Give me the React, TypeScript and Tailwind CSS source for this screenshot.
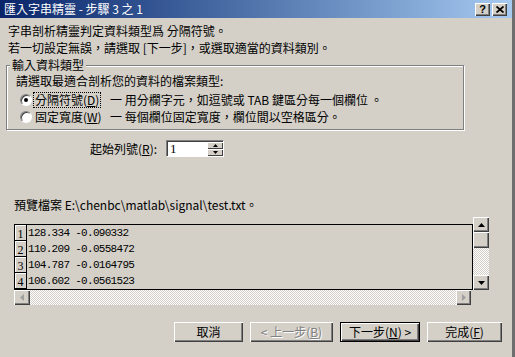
import React from 'react';

const rows = [
  { n: '1', v: '128.334 -0.090332' },
  { n: '2', v: '110.209 -0.0558472' },
  { n: '3', v: '104.787 -0.0164795' },
  { n: '4', v: '106.602 -0.0561523' },
];

const Tri: React.FC<{ dir: 'up' | 'down' | 'left' | 'right'; color?: string }> = ({ dir, color = '#000' }) => {
  const vertical = dir === 'up' || dir === 'down';
  const pts = {
    up: '0,4 3.5,0 7,4',
    down: '0,0 3.5,4 7,0',
    left: '4,0 0,3.5 4,7',
    right: '0,0 4,3.5 0,7',
  }[dir];
  return (
    <svg width={vertical ? 7 : 4} height={vertical ? 4 : 7} viewBox={vertical ? '0 0 7 4' : '0 0 4 7'}>
      <polygon points={pts} fill={color} />
    </svg>
  );
};

const Radio: React.FC<{ checked?: boolean }> = ({ checked }) => (
  <div className="w-[12px] h-[12px] rounded-full bg-white border border-t-[#808080] border-l-[#808080] border-b-white border-r-white shadow-[inset_1px_1px_0_#404040] flex items-center justify-center">
    {checked && <div className="w-[4px] h-[4px] rounded-full bg-black" />}
  </div>
);

export default function App() {
  return (
    <div className="w-[515px] h-[357px] overflow-hidden bg-[#d4d0c8] border-r-[3px] border-r-[#6e6e6e] flex flex-col text-[12px] text-black font-['Noto_Sans_CJK_TC','Noto_Sans_CJK_SC',sans-serif]">
      {/* title bar */}
      <div className="h-[18px] shrink-0 flex items-center justify-between bg-gradient-to-r from-[#0a246a] to-[#a6caf0] pl-[4px] pr-[5px]">
        <span className="text-white leading-[18px]">匯入字串精靈 - 步驟 3 之 1</span>
        <div className="flex gap-[2px]">
          <div className="w-[15px] h-[13px] bg-[#d4d0c8] shadow-[inset_1px_1px_0_#fff,inset_-1px_-1px_0_#404040,inset_-2px_-2px_0_#808080] flex items-center justify-center text-[11px] font-bold leading-none font-['Liberation_Sans',sans-serif]">
            ?
          </div>
          <div className="w-[15px] h-[13px] bg-[#d4d0c8] shadow-[inset_1px_1px_0_#fff,inset_-1px_-1px_0_#404040,inset_-2px_-2px_0_#808080] flex items-center justify-center">
            <svg width="8" height="7" viewBox="0 0 8 7">
              <path d="M0.5 0.5 L7.5 6.5 M7.5 0.5 L0.5 6.5" stroke="#000" strokeWidth="1.8" />
            </svg>
          </div>
        </div>
      </div>

      <div className="pl-[8px] pt-[4px] leading-[17px]">
        <p>字串剖析精靈判定資料類型爲 分隔符號。</p>
        <p>若一切設定無誤，請選取 [下一步]，或選取適當的資料類別。</p>
      </div>

      {/* data type group */}
      <fieldset className="mt-[3px] ml-[6px] w-[458px] border border-[#808080] shadow-[1px_1px_0_#fff,inset_1px_1px_0_#fff] pl-[9px] pb-[4px]">
        <legend className="ml-[-6px] px-[2px] leading-[12px] bg-[#d4d0c8]">輸入資料類型</legend>
        <p className="pt-[1px] leading-[17px]">請選取最適合剖析您的資料的檔案類型:</p>
        <div className="mt-[2px] flex flex-col">
          <div className="flex items-center h-[17px] whitespace-nowrap">
            <div className="ml-[4px]">
              <Radio checked />
            </div>
            <div className="ml-[1px] w-[74px] h-[16px] flex items-center">
              <span className="border border-dotted border-black px-[1px] leading-[14px]">
                分隔符號(<span className="underline">D</span>)
              </span>
            </div>
            <span className="ml-[3px] leading-[17px]">一 用分欄字元，如逗號或 TAB 鍵區分每一個欄位 。</span>
          </div>
          <div className="flex items-center h-[17px] whitespace-nowrap">
            <div className="ml-[4px]">
              <Radio />
            </div>
            <div className="ml-[1px] w-[74px] h-[16px] flex items-center">
              <span className="px-[2px] leading-[14px]">
                固定寬度(<span className="underline">W</span>)
              </span>
            </div>
            <span className="ml-[3px] leading-[17px]">一 每個欄位固定寬度，欄位間以空格區分。</span>
          </div>
        </div>
      </fieldset>

      {/* start row */}
      <div className="mt-[10px] pl-[90px] flex items-center h-[17px] whitespace-nowrap">
        <span className="w-[76px] leading-[17px]">
          起始列號(<span className="underline">R</span>):
        </span>
        <div className="w-[58px] h-[17px] bg-white border border-t-[#808080] border-l-[#808080] border-b-white border-r-white shadow-[inset_1px_1px_0_#404040] flex">
          <span className="flex-1 pl-[3px] leading-[15px] font-['Liberation_Serif',serif] text-[13px]">1</span>
          <div className="w-[16px] flex flex-col pt-[1px]">
            <div className="flex-1 bg-[#d4d0c8] shadow-[inset_1px_1px_0_#fff,inset_-1px_-1px_0_#404040] flex items-center justify-center">
              <svg width="5" height="3" viewBox="0 0 5 3">
                <polygon points="0,3 2.5,0 5,3" fill="#000" />
              </svg>
            </div>
            <div className="flex-1 bg-[#d4d0c8] shadow-[inset_1px_1px_0_#fff,inset_-1px_-1px_0_#404040] flex items-center justify-center">
              <svg width="5" height="3" viewBox="0 0 5 3">
                <polygon points="0,0 2.5,3 5,0" fill="#000" />
              </svg>
            </div>
          </div>
        </div>
      </div>

      <p className="mt-[39px] pl-[14px] leading-[17px]">預覽檔案 E:\chenbc\matlab\signal\test.txt。</p>

      {/* preview */}
      <div className="mt-[4px] pl-[14px] flex items-start">
        <div className="pt-[7px] flex flex-col">
          <div className="w-[459px] h-[66px] border border-black flex flex-col">
            {rows.map((r) => (
              <div key={r.n} className="h-[16px] flex items-stretch">
                <div className="w-[12px] border-r border-b border-black bg-[#d4d0c8] shadow-[inset_1px_1px_0_#fff] flex items-end justify-center font-['Liberation_Serif',serif] text-[12px] leading-[12px]">
                  {r.n}
                </div>
                <span className="pl-[1px] font-['Liberation_Mono',monospace] text-[11px] tracking-[-0.7px] leading-[16px]">
                  {r.v}
                </span>
              </div>
            ))}
          </div>
          <div className="w-[457px] h-[15px] flex bg-[image:repeating-conic-gradient(#ffffff_0_25%,#d4d0c8_0_50%)] bg-[length:2px_2px]">
            <div className="w-[16px] h-full bg-[#d4d0c8] shadow-[inset_1px_1px_0_#fff,inset_-1px_-1px_0_#404040,inset_-2px_-2px_0_#808080] flex items-center justify-center">
              <Tri dir="left" color="#a0a0a0" />
            </div>
            <div className="flex-1" />
            <div className="w-[15px] h-full bg-[#d4d0c8] shadow-[inset_1px_1px_0_#fff,inset_-1px_-1px_0_#404040,inset_-2px_-2px_0_#808080] flex items-center justify-center">
              <Tri dir="right" color="#a0a0a0" />
            </div>
          </div>
        </div>
        <div className="w-[16px] h-[73px] flex flex-col bg-[image:repeating-conic-gradient(#ffffff_0_25%,#d4d0c8_0_50%)] bg-[length:2px_2px]">
          <div className="h-[15px] bg-[#d4d0c8] shadow-[inset_1px_1px_0_#fff,inset_-1px_-1px_0_#404040,inset_-2px_-2px_0_#808080] flex items-center justify-center">
            <Tri dir="up" />
          </div>
          <div className="h-[16px] bg-[#d4d0c8] shadow-[inset_1px_1px_0_#fff,inset_-1px_-1px_0_#404040,inset_-2px_-2px_0_#808080]" />
          <div className="flex-1" />
          <div className="h-[15px] bg-[#d4d0c8] shadow-[inset_1px_1px_0_#fff,inset_-1px_-1px_0_#404040,inset_-2px_-2px_0_#808080] flex items-center justify-center">
            <Tri dir="down" />
          </div>
        </div>
      </div>

      {/* buttons */}
      <div className="mt-[17px] pl-[174px] flex gap-[7px] whitespace-nowrap">
        <button className="w-[69px] h-[20px] bg-[#d4d0c8] shadow-[inset_1px_1px_0_#fff,inset_-1px_-1px_0_#404040,inset_-2px_-2px_0_#808080] leading-[20px]">
          取消
        </button>
        <button className="w-[83px] h-[20px] bg-[#d4d0c8] shadow-[inset_1px_1px_0_#fff,inset_-1px_-1px_0_#404040,inset_-2px_-2px_0_#808080] leading-[20px] text-[#808080] [text-shadow:1px_1px_0_#fff]">
          &lt; 上一步(<span className="underline">B</span>)
        </button>
        <button className="w-[80px] h-[20px] border border-black bg-[#d4d0c8] shadow-[inset_1px_1px_0_#fff,inset_-1px_-1px_0_#404040,inset_-2px_-2px_0_#808080] leading-[18px]">
          下一步(<span className="underline">N</span>) &gt;
        </button>
        <button className="w-[75px] h-[20px] bg-[#d4d0c8] shadow-[inset_1px_1px_0_#fff,inset_-1px_-1px_0_#404040,inset_-2px_-2px_0_#808080] leading-[20px]">
          完成(<span className="underline">F</span>)
        </button>
      </div>
    </div>
  );
}
